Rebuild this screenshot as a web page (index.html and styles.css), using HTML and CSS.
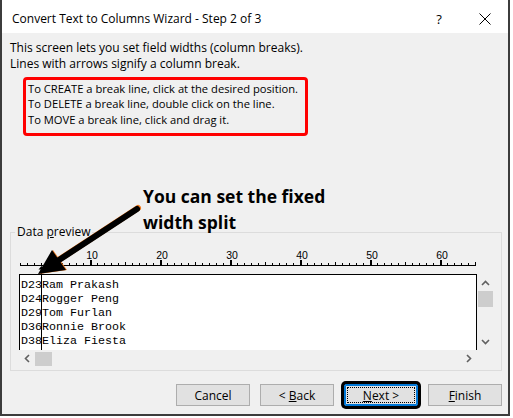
FILE: index.html
```html
<!DOCTYPE html>
<html>
<head>
<meta charset="utf-8">
<link rel="stylesheet" href="styles.css">
</head>
<body>
<div class="dialog">
  <div class="titlebar">
    <span class="title">Convert Text to Columns Wizard - Step 2 of 3</span>
    <span class="tb-btn help">?</span>
    <span class="tb-btn close">
      <svg width="12" height="12" viewBox="0 0 12 12"><path d="M0.5 0.5L11.5 11.5M11.5 0.5L0.5 11.5" stroke="#000" stroke-width="1"/></svg>
    </span>
  </div>
  <div class="content">
    <p class="desc">This screen lets you set field widths (column breaks).<br>Lines with arrows signify a column break.</p>
    <div class="hint">
      <div>To CREATE a break line, click at the desired position.</div>
      <div>To DELETE a break line, double click on the line.</div>
      <div>To MOVE a break line, click and drag it.</div>
    </div>
    <fieldset class="group">
      <legend>Data <u>p</u>review</legend>
      <svg class="ruler" width="460" height="30" viewBox="0 0 460 30">
        <defs>
          <pattern id="tick-s" x="1" y="19" width="7" height="2" patternUnits="userSpaceOnUse"><rect width="1" height="2" fill="#000"/></pattern>
          <pattern id="tick-m" x="36" y="18" width="70" height="3" patternUnits="userSpaceOnUse"><rect width="1" height="3" fill="#000"/></pattern>
          <pattern id="tick-l" x="71" y="16" width="70" height="5" patternUnits="userSpaceOnUse"><rect width="2" height="5" fill="#000"/></pattern>
        </defs>
        <rect x="1" y="19" width="456" height="2" fill="url(#tick-s)"/>
        <rect x="36" y="18" width="421" height="3" fill="url(#tick-m)"/>
        <rect x="71" y="16" width="386" height="5" fill="url(#tick-l)"/>
        <rect x="1" y="21" width="456" height="1" fill="#000"/>
        <g class="ruler-num" text-anchor="middle">
          <text x="73" y="15">10</text>
          <text x="143" y="15">20</text>
          <text x="213" y="15">30</text>
          <text x="283" y="15">40</text>
          <text x="353" y="15">50</text>
          <text x="423" y="15">60</text>
        </g>
        <rect x="22" y="24" width="1" height="6" fill="#000"/>
        <polygon points="19.5,25.5 22.5,22 25.5,25.5" fill="#000"/>
      </svg>
      <div class="preview-wrap">
        <div class="preview">
          <div class="row">D23Ram Prakash</div>
          <div class="row">D24Rogger Peng</div>
          <div class="row">D29Tom Furlan</div>
          <div class="row">D36Ronnie Brook</div>
          <div class="row">D38Eliza Fiesta</div>
          <span class="break"></span>
        </div>
        <div class="vscroll">
          <span class="sb-btn"><svg width="9" height="6" viewBox="0 0 9 6"><path d="M1 5L4.5 1.5L8 5" fill="none" stroke="#606060" stroke-width="1.6"/></svg></span>
          <span class="vthumb"></span>
          <span class="sb-fill"></span>
          <span class="sb-btn"><svg width="9" height="6" viewBox="0 0 9 6"><path d="M1 1L4.5 4.5L8 1" fill="none" stroke="#606060" stroke-width="1.6"/></svg></span>
        </div>
      </div>
      <div class="hscroll">
        <span class="sb-btn h"><svg width="6" height="9" viewBox="0 0 6 9"><path d="M5 1L1.5 4.5L5 8" fill="none" stroke="#606060" stroke-width="1.6"/></svg></span>
        <span class="hthumb"></span>
        <span class="sb-fill"></span>
        <span class="sb-btn h"><svg width="6" height="9" viewBox="0 0 6 9"><path d="M1 1L4.5 4.5L1 8" fill="none" stroke="#606060" stroke-width="1.6"/></svg></span>
      </div>
    </fieldset>
    <div class="buttons">
      <button class="btn">Cancel</button>
      <button class="btn">&lt; <u>B</u>ack</button>
      <button class="btn default"><span class="focus"><u>N</u>ext &gt;</span></button>
      <button class="btn"><u>F</u>inish</button>
    </div>
  </div>
  <div class="callout">You can set the fixed<br>width split</div>
  <svg class="callout-arrow" width="115" height="80" viewBox="30 200 115 80">
    <line x1="138" y1="208" x2="60" y2="259" stroke="#f07a1e" stroke-width="6" stroke-linecap="round"/>
    <polygon points="39,274 53,250 67,270" fill="#f07a1e"/>
    <line x1="137" y1="209" x2="59" y2="260" stroke="#000" stroke-width="6" stroke-linecap="round"/>
    <polygon points="38,274 52,250 66,270" fill="#000"/>
  </svg>
</div>
</body>
</html>
```

FILE: styles.css
```css
html, body {
  margin: 0;
  padding: 0;
  background: #fff;
}

body {
  width: 513px;
  height: 418px;
  overflow: hidden;
  font-family: "Open Sans", "Noto Sans", sans-serif;
  font-size: 12px;
  color: #000;
}

.dialog {
  position: relative;
  width: 506px;
  height: 414px;
  border: 2px solid #3c3c3c;
  border-top: 0;
  background: #f0f0f0;
  display: flex;
  flex-direction: column;
}

.titlebar {
  height: 33px;
  box-sizing: border-box;
  padding-top: 4px;
  background: #fff;
  display: flex;
  align-items: center;
}

.title {
  flex: 1;
  padding-left: 10px;
  line-height: 16px;
  white-space: nowrap;
}

.tb-btn {
  width: 46px;
  display: flex;
  justify-content: center;
  align-items: center;
  line-height: 16px;
}

.help {
  font-size: 13px;
}

.content {
  flex: 1;
  padding: 7px 6px 0 8px;
}

.desc {
  margin: 0;
  line-height: 16px;
}

.hint {
  margin: 5px 0 0 13px;
  width: 285px;
  box-sizing: border-box;
  border: 3px solid #ff0000;
  border-radius: 4px;
  padding: 1px 0 6px 2px;
  font-size: 11.2px;
  line-height: 15.4px;
  white-space: nowrap;
}

.group {
  margin: 88px 0 0;
  width: 492px;
  box-sizing: border-box;
  min-width: 0;
  padding: 4px 0 3px 8px;
  border: 1px solid #dcdcdc;
}

.group legend {
  margin-left: -4px;
  padding: 0 2px;
  line-height: 16px;
}

.ruler {
  display: block;
}

.ruler-num {
  font-family: "Liberation Sans", Arial, sans-serif;
  font-size: 10.5px;
  fill: #000;
}

.preview-wrap {
  display: flex;
}

.preview {
  position: relative;
  width: 458px;
  height: 76px;
  box-sizing: border-box;
  border: 1px solid #000;
  border-bottom: 0;
  background: #fff;
  padding: 3px 0 0 1px;
  font-family: "Liberation Mono", "Courier New", monospace;
  font-size: 11.67px;
  line-height: 14px;
}

.row {
  white-space: pre;
}

.break {
  position: absolute;
  left: 21px;
  top: 0;
  bottom: 0;
  width: 1px;
  background: #000;
}

.vscroll {
  width: 17px;
  height: 76px;
  display: flex;
  flex-direction: column;
}

.sb-btn {
  width: 17px;
  height: 17px;
  display: flex;
  justify-content: center;
  align-items: center;
  flex: none;
}

.sb-btn.h {
  width: 16px;
}

.sb-fill {
  flex: 1;
}

.vthumb {
  width: 15px;
  height: 16px;
  margin-left: 1px;
  background: #cdcdcd;
}

.hscroll {
  width: 458px;
  height: 17px;
  display: flex;
  align-items: flex-start;
}

.hthumb {
  width: 17px;
  height: 14px;
  margin-top: 2px;
  background: #cdcdcd;
}

.buttons {
  display: flex;
  justify-content: flex-end;
  gap: 10px;
  margin-top: 13px;
}

.btn {
  width: 74px;
  height: 22px;
  box-sizing: border-box;
  border: 1px solid #adadad;
  background: #e1e1e1;
  font-family: inherit;
  font-size: 12px;
  color: #000;
  padding: 0;
  margin: 0;
}

.btn.default {
  border-color: #0078d7;
  border-radius: 2px;
  box-shadow: inset 0 0 0 1px #0078d7, 0 0 0 3px #000;
  padding: 2px;
  display: flex;
}

.focus {
  flex: 1;
  border: 1px dotted #000;
  display: flex;
  justify-content: center;
  align-items: center;
  background: #e1e1e1;
}

.callout {
  position: absolute;
  left: 141px;
  top: 184px;
  font-size: 17.5px;
  font-weight: 700;
  line-height: 25.5px;
  white-space: nowrap;
}

.callout-arrow {
  position: absolute;
  left: 28px;
  top: 200px;
}
```
